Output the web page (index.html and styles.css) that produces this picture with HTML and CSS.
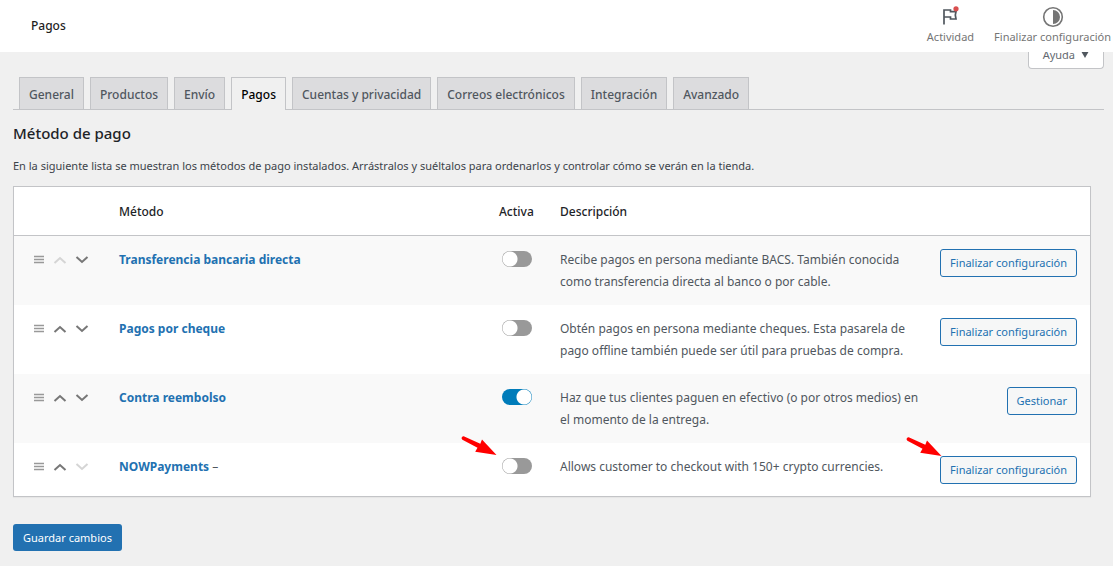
FILE: index.html
```html
<!DOCTYPE html>
<html lang="es">
<head>
<meta charset="utf-8">
<meta name="viewport" content="width=device-width, initial-scale=1">
<title>Pagos</title>
<link rel="stylesheet" href="styles.css">
</head>
<body>
<svg class="sprite" aria-hidden="true">
  <symbol id="grip" viewBox="0 0 12 10"><path d="M1 1.500h10M1 4.500h10M1 7.500h10" fill="none" stroke="currentColor" stroke-width="1.400"/></symbol>
  <symbol id="up" viewBox="0 0 14 8"><path d="M1.500 7 7 2l5.500 5" fill="none" stroke="currentColor" stroke-width="2"/></symbol>
  <symbol id="down" viewBox="0 0 14 8"><path d="M1.500 1 7 6l5.500-5" fill="none" stroke="currentColor" stroke-width="2"/></symbol>
  <symbol id="arrow" viewBox="0 0 36 20"><path d="M2.700 .2C.8-.2-.2 2.700 1.400 3.700L16.500 11.800l-2.300 4L35.500 19 21 3.500l-1.700 4.300z" fill="#f00"/></symbol>
</svg>
<header class="topbar">
  <h1 class="topbar-title">Pagos</h1>
  <nav class="activity">
    <button class="activity-item" type="button">
      <svg class="activity-icon" viewBox="0 0 22 22" aria-hidden="true"><path d="M5 18.500V4h6.500v1.700H17L16.300 9l.7 4h-5.500v-2H5" fill="none" stroke="#50575e" stroke-width="1.700"/><circle cx="17" cy="2.800" r="2.600" fill="#d94f4f"/></svg>
      <span>Actividad</span>
    </button>
    <button class="activity-item" type="button">
      <svg class="activity-icon" viewBox="0 0 22 22" aria-hidden="true"><circle cx="11" cy="11" r="9.300" fill="none" stroke="#757575" stroke-width="1.600"/><path d="M11 4a7 7 0 0 1 0 14z" fill="#757575"/></svg>
      <span>Finalizar configuración</span>
    </button>
  </nav>
</header>
<main class="page">
  <div class="help"><button class="help-button" type="button">Ayuda <svg class="caret" viewBox="0 0 8 7" aria-hidden="true"><path d="M0 0h8L4 7z" fill="#50575e"/></svg></button></div>
  <nav class="tabs">
    <a class="tab" href="#general">General</a>
    <a class="tab" href="#productos">Productos</a>
    <a class="tab" href="#envio">Envío</a>
    <a class="tab tab-active" href="#pagos">Pagos</a>
    <a class="tab" href="#cuentas">Cuentas y privacidad</a>
    <a class="tab" href="#correos">Correos electrónicos</a>
    <a class="tab" href="#integracion">Integración</a>
    <a class="tab" href="#avanzado">Avanzado</a>
  </nav>
  <form class="settings">
    <h2 class="heading">Método de pago</h2>
    <p class="intro">En la siguiente lista se muestran los métodos de pago instalados. Arrástralos y suéltalos para ordenarlos y controlar cómo se verán en la tienda.</p>
    <table class="gateways">
      <colgroup><col class="col-sort"><col><col class="col-status"><col><col class="col-action"></colgroup>
      <thead>
        <tr><th></th><th>Método</th><th>Activa</th><th>Descripción</th><th></th></tr>
      </thead>
      <tbody>
        <tr>
          <td><div class="sort"><svg class="grip"><use href="#grip"/></svg><button class="move" type="button" aria-label="Subir" disabled><svg class="chevron"><use href="#up"/></svg></button><button class="move" type="button" aria-label="Bajar"><svg class="chevron"><use href="#down"/></svg></button></div></td>
          <td><a class="name" href="#bacs">Transferencia bancaria directa</a></td>
          <td><div class="status"><input class="toggle" type="checkbox" aria-label="Activar Transferencia bancaria directa"></div></td>
          <td class="description">Recibe pagos en persona mediante BACS. También conocida como transferencia directa al banco o por cable.</td>
          <td><div class="action"><button class="button" type="button">Finalizar configuración</button></div></td>
        </tr>
        <tr>
          <td><div class="sort"><svg class="grip"><use href="#grip"/></svg><button class="move" type="button" aria-label="Subir"><svg class="chevron"><use href="#up"/></svg></button><button class="move" type="button" aria-label="Bajar"><svg class="chevron"><use href="#down"/></svg></button></div></td>
          <td><a class="name" href="#cheque">Pagos por cheque</a></td>
          <td><div class="status"><input class="toggle" type="checkbox" aria-label="Activar Pagos por cheque"></div></td>
          <td class="description">Obtén pagos en persona mediante cheques. Esta pasarela de pago offline también puede ser útil para pruebas de compra.</td>
          <td><div class="action"><button class="button" type="button">Finalizar configuración</button></div></td>
        </tr>
        <tr>
          <td><div class="sort"><svg class="grip"><use href="#grip"/></svg><button class="move" type="button" aria-label="Subir"><svg class="chevron"><use href="#up"/></svg></button><button class="move" type="button" aria-label="Bajar"><svg class="chevron"><use href="#down"/></svg></button></div></td>
          <td><a class="name" href="#cod">Contra reembolso</a></td>
          <td><div class="status"><input class="toggle" type="checkbox" aria-label="Activar Contra reembolso" checked></div></td>
          <td class="description">Haz que tus clientes paguen en efectivo (o por otros medios) en el momento de la entrega.</td>
          <td><div class="action"><button class="button" type="button">Gestionar</button></div></td>
        </tr>
        <tr>
          <td><div class="sort"><svg class="grip"><use href="#grip"/></svg><button class="move" type="button" aria-label="Subir"><svg class="chevron"><use href="#up"/></svg></button><button class="move" type="button" aria-label="Bajar" disabled><svg class="chevron"><use href="#down"/></svg></button></div></td>
          <td><a class="name" href="#nowpayments">NOWPayments</a> –</td>
          <td><div class="status"><input class="toggle" type="checkbox" aria-label="Activar NOWPayments"><svg class="pointer"><use href="#arrow"/></svg></div></td>
          <td class="description">Allows customer to checkout with 150+ crypto currencies.</td>
          <td><div class="action"><button class="button" type="button">Finalizar configuración<svg class="pointer pointer-button"><use href="#arrow"/></svg></button></div></td>
        </tr>
      </tbody>
    </table>
    <button class="save" type="submit">Guardar cambios</button>
  </form>
</main>
</body>
</html>
```
FILE: styles.css
```css
* { box-sizing: border-box; }
body {
  margin: 0;
  background: #f0f0f0;
  color: #50575e;
  font: 12px/22px "Noto Sans", "Open Sans", sans-serif;
}
button { font: inherit; cursor: pointer; }
.sprite { display: none; }
.topbar {
  position: sticky;
  top: 0;
  z-index: 1;
  display: flex;
  justify-content: space-between;
  align-items: center;
  height: 52px;
  padding: 0 2px 0 31px;
  background: #fff;
}
.topbar-title { margin: 0; color: #1e1e1e; font-size: 12px; font-weight: 500; }
.activity { display: flex; gap: 20px; }
.activity-item {
  display: flex;
  flex-direction: column;
  align-items: center;
  padding: 0;
  border: 0;
  background: none;
  color: #757575;
  font-size: 11px;
  line-height: 18px;
}
.activity-icon { width: 22px; height: 22px; }
.page { padding: 0 9px 15px 13px; }
.help { display: flex; justify-content: flex-end; }
.help-button {
  display: flex;
  align-items: center;
  gap: 6px;
  height: 28px;
  margin-top: -11px;
  padding: 0 14px;
  border: 1px solid #c3c4c7;
  border-top: 0;
  border-radius: 0 0 4px 4px;
  background: #fff;
  color: #646970;
  font-size: 11px;
}
.caret { width: 8px; height: 7px; }
.tabs {
  display: flex;
  gap: 6px;
  margin-top: 8px;
  padding-left: 6px;
  border-bottom: 1px solid #c3c4c7;
}
.tab {
  height: 32px;
  padding: 5px 9px 2px;
  border: 1px solid #c3c4c7;
  border-bottom: 0;
  background: #dcdcde;
  color: #50575e;
  font-weight: 500;
  line-height: 24px;
  text-decoration: none;
}
.tab-active { height: 33px; margin-bottom: -1px; background: #f0f0f0; color: #000; }
.settings { padding-right: 13px; }
.heading { margin: 12px 0 11px; color: #1d2327; font-size: 15px; font-weight: 500; line-height: 22px; }
.intro { margin: 0 0 9px; color: #3c434a; font-size: 11px; }
.gateways {
  width: 100%;
  table-layout: fixed;
  border: 1px solid #c3c4c7;
  border-spacing: 0;
  background: #fff;
  box-shadow: 0 1px 1px #0000000a;
}
.col-sort { width: 92px; }
.col-status { width: 61px; }
.col-action { width: 163px; }
.gateways th {
  padding: 14px 13px 12px;
  border-bottom: 1px solid #c3c4c7;
  color: #1d2327;
  font-weight: 500;
  text-align: left;
}
.gateways td { padding: 13px 13px 12px; vertical-align: top; }
.gateways tbody tr:nth-child(odd) { background: #f9f9f9; }
.gateways .description { padding-right: 0; }
.gateways td:last-child { padding-left: 0; }
.sort { display: flex; align-items: center; gap: 8px; height: 22px; padding-left: 6px; }
.grip { width: 12px; height: 10px; color: #999; }
.move { display: flex; padding: 0; border: 0; background: none; color: #777; }
.move:disabled { color: #d5d5d5; }
.chevron { width: 14px; height: 8px; }
.name { color: #2271b1; font-weight: 700; text-decoration: none; }
.status { position: relative; display: flex; padding: 2px 0 0 3px; }
.toggle {
  appearance: none;
  width: 30px;
  height: 16px;
  margin: 0;
  flex: none;
  border-radius: 8px;
  background: radial-gradient(circle at 8px 8px, #fff 7px, #999 8px);
}
.toggle:checked { background: radial-gradient(circle at 22px 8px, #fff 7px, #007cba 8px); }
.pointer { position: absolute; left: -38px; top: -20px; width: 36px; height: 20px; }
.action { display: flex; justify-content: flex-end; }
.button {
  position: relative;
  height: 28px;
  padding: 0 9px;
  border: 1px solid #2271b1;
  border-radius: 3px;
  background: #f6f7f7;
  color: #2271b1;
  font-size: 11px;
  white-space: nowrap;
}
.pointer-button { left: -35px; }
.save {
  height: 27px;
  margin-top: 27px;
  padding: 0 10px;
  border: 0;
  border-radius: 3px;
  background: #2271b1;
  color: #fff;
  font-size: 11px;
}
```
